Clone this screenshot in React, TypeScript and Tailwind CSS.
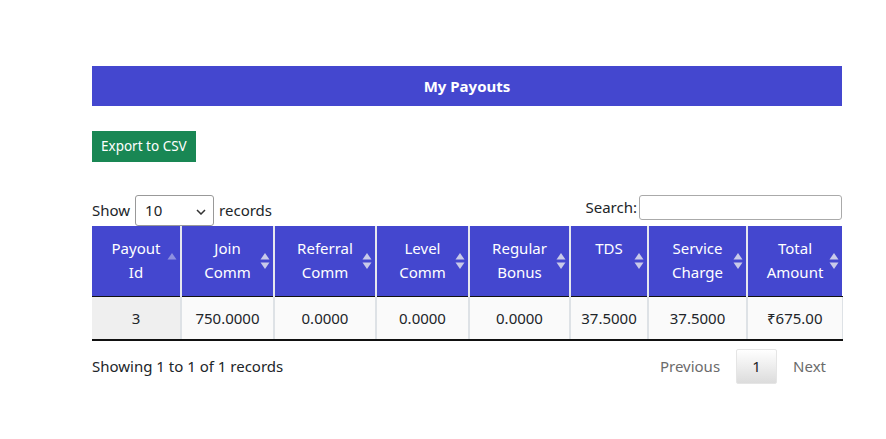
import React from "react";

const cols = [
  { label: ["Payout", "Id"], w: 89, sorted: true },
  { label: ["Join", "Comm"], w: 93 },
  { label: ["Referral", "Comm"], w: 102 },
  { label: ["Level", "Comm"], w: 93 },
  { label: ["Regular", "Bonus"], w: 101 },
  { label: ["TDS"], w: 78 },
  { label: ["Service", "Charge"], w: 99 },
  { label: ["Total", "Amount"], w: 95 },
];

const row = ["3", "750.0000", "0.0000", "0.0000", "0.0000", "37.5000", "37.5000", "₹675.00"];

function SortIcon({ sorted }: { sorted?: boolean }) {
  return (
    <svg width="10" height="18" viewBox="0 0 10 18" className="absolute right-[3px] top-1/2 -translate-y-1/2">
      <polygon points="5,1 9.5,7.5 0.5,7.5" fill={sorted ? "#8f91e0" : "#c9cae9"} />
      {!sorted && <polygon points="5,17 9.5,10.5 0.5,10.5" fill="#c9cae9" />}
    </svg>
  );
}

export default function App() {
  return (
    <div className="w-[886px] h-[439px] bg-white text-[#212529] font-['Noto_Sans','Open_Sans',sans-serif] text-[15px]">
      <div className="ml-[92px] w-[750px] pt-[66px]">
        <div className="h-[40px] bg-[#4447cf] flex items-center justify-center text-white font-bold text-[15px]">
          My Payouts
        </div>
        <button className="mt-[25px] h-[31px] px-[9px] bg-[#198754] text-white text-[13.5px]">
          Export to CSV
        </button>
        <div className="mt-[33px] flex justify-between items-end">
          <div className="flex items-center gap-[5px]">
            <span>Show</span>
            <div className="relative w-[79px] h-[31px] border border-[#999] rounded-[3px] flex items-center pl-[9px] bg-white">
              <span>10</span>
              <svg width="10" height="6" viewBox="0 0 10 6" className="absolute right-[7px] top-[13px]">
                <path d="M1 1 L5 5 L9 1" stroke="#333" strokeWidth="1.5" fill="none" />
              </svg>
            </div>
            <span>records</span>
          </div>
          <div className="flex items-center gap-[2px] mb-[6px]">
            <span>Search:</span>
            <div className="w-[203px] h-[25px] border border-[#aaa] rounded-[3px] bg-white" />
          </div>
        </div>
        <table className="table-fixed border-collapse w-[750px]">
          <colgroup>
            {cols.map((c, i) => (
              <col key={i} style={{ width: c.w }} />
            ))}
          </colgroup>
          <thead>
            <tr className="h-[70px]">
              {cols.map((c, i) => (
                <th
                  key={i}
                  className={`relative bg-[#4447cf] text-white font-normal leading-[24px] align-top pt-[10px] border-b border-b-[#111] ${i > 0 ? "border-l-2 border-l-[#e6e7ee]" : ""}`}
                >
                  <div className="px-[8px]">
                    {c.label.map((l, j) => (
                      <div key={j}>{l}</div>
                    ))}
                  </div>
                  <SortIcon sorted={c.sorted} />
                </th>
              ))}
            </tr>
          </thead>
          <tbody>
            <tr className="h-[44px]">
              {row.map((v, i) => (
                <td
                  key={i}
                  className={`text-center border-t border-t-[#dee2e6] border-b-2 border-b-[#111] ${i === 0 ? "bg-[#efefef]" : "bg-[#fafafa]"} ${i > 0 ? "border-l-2 border-l-[#dee2e6]" : ""} ${i === row.length - 1 ? "border-r border-r-[#dee2e6]" : ""}`}
                >
                  {v}
                </td>
              ))}
            </tr>
          </tbody>
        </table>
        <div className="mt-[8px] flex justify-between items-center">
          <span>Showing 1 to 1 of 1 records</span>
          <div className="flex items-center">
            <span className="text-[#6b6b6b] px-[16px]">Previous</span>
            <span className="w-[41px] h-[35px] flex items-center justify-center rounded-[2px] border border-[#e5e5e5] bg-gradient-to-b from-white to-[#dcdcdc]">1</span>
            <span className="text-[#6b6b6b] pl-[16px] pr-[16px]">Next</span>
          </div>
        </div>
      </div>
    </div>
  );
}
